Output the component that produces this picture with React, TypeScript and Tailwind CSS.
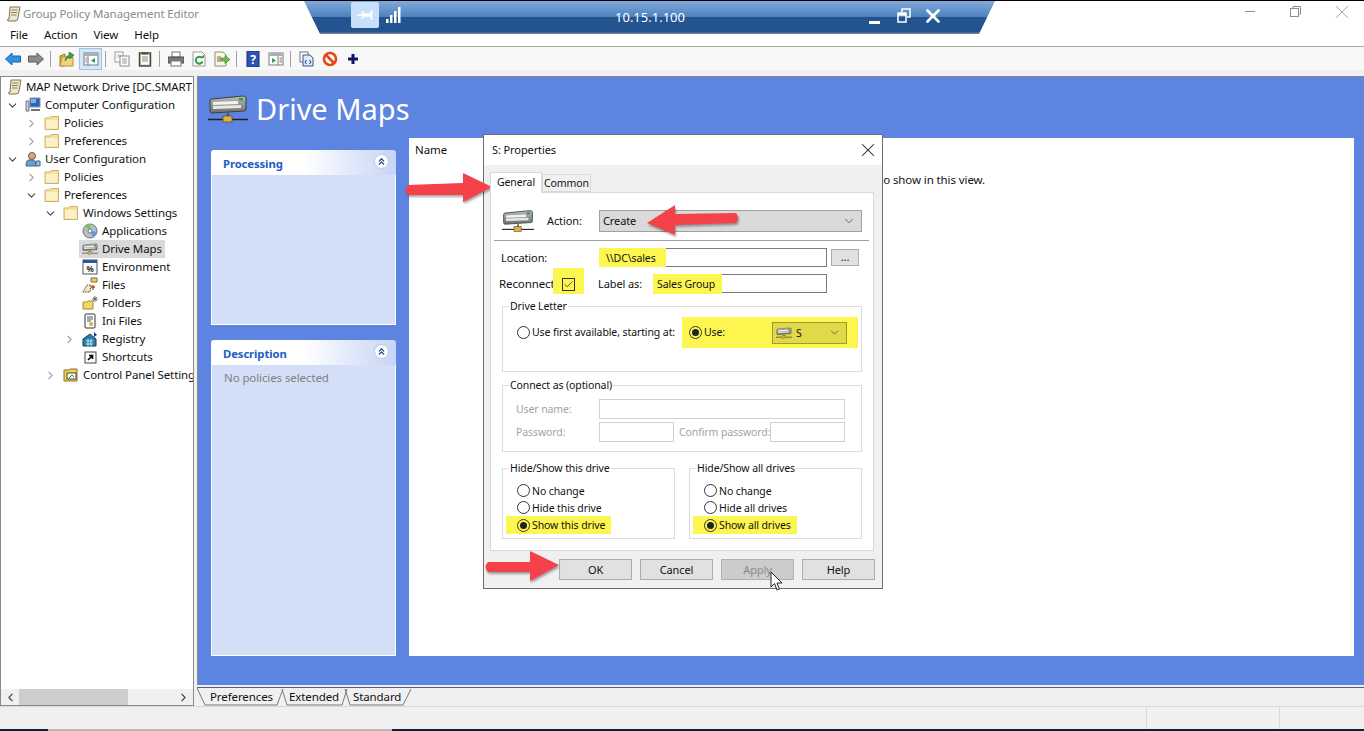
import { ReactNode } from "react"
import { ChevronDown, ChevronRight, ChevronLeft, ChevronsUp, X, Check } from "lucide-react"

// --- little drawings -------------------------------------------------------

function DriveIcon({ className }: { className?: string }) {
  return (
    <svg viewBox="0 0 40 28" className={"shrink-0 " + (className ?? "")}>
      <defs>
        <linearGradient id="dg" x1="0" y1="0" x2="0" y2="1">
          <stop offset="0" stopColor="#b9bcb9" />
          <stop offset="1" stopColor="#6d706c" />
        </linearGradient>
      </defs>
      <path d="M2 6 Q2 4 4 4 L35 1 Q38 1 38 3 L38 14 Q38 16 36 16 L4 18 Q2 18 2 16Z" fill="url(#dg)" stroke="#3c3f3c" strokeWidth="1" />
      <path d="M5 7 L30 6 L30 9 L5 10Z" fill="#f2f3f2" />
      <path d="M5 11 L33 10 L33 13 L5 14Z" fill="#e6e8e6" />
      <rect x="31" y="3" width="4" height="2.5" fill="#1fa83c" />
      <rect x="19" y="18" width="2" height="4" fill="#555" />
      <path d="M0 24.5 H40" stroke="#222" strokeWidth="1.4" />
      <rect x="15" y="21" width="9" height="6" fill="#d8b24a" stroke="#6b5518" strokeWidth="0.8" />
    </svg>
  )
}

function ScrollIcon() {
  return (
    <svg viewBox="0 0 16 16" className="w-4 h-4 shrink-0">
      <path d="M4 1 H14 L12 12 Q12 15 9 15 H2 Q1 15 2 13 H3Z" fill="#eee6c8" stroke="#7d7458" />
      <path d="M5.5 4 H11.5 M5 6.5 H11 M5 9 H10.5" stroke="#8a8268" />
    </svg>
  )
}

function FolderIcon() {
  return (
    <svg viewBox="0 0 16 16" className="w-4 h-4 shrink-0">
      <path d="M1 3 H6 L7 1.5 H14.5 V14.5 H1Z" fill="#f7df9e" stroke="#cfb26a" />
      <path d="M2 5 H13.5 V13.5 H2Z" fill="#fcf0c4" />
    </svg>
  )
}

function ComputerIcon() {
  return (
    <svg viewBox="0 0 16 16" className="w-4 h-4 shrink-0">
      <rect x="5" y="1" width="10" height="9" fill="#2b63b8" stroke="#8a93a3" />
      <rect x="6" y="2" width="5" height="4" fill="#7fb2ec" />
      <path d="M1 4 H4 V14 H1Z" fill="#ccd0d6" stroke="#6b7280" />
      <path d="M6 13 H15" stroke="#6b7280" strokeWidth="2" />
    </svg>
  )
}

function UserIcon() {
  return (
    <svg viewBox="0 0 16 16" className="w-4 h-4 shrink-0">
      <path d="M1 15 Q1 9 4 9 H8 Q11 9 11 15Z" fill="#6f9bc8" stroke="#3f6690" />
      <circle cx="7" cy="5" r="3.5" fill="#d9a878" stroke="#75553a" />
      <path d="M11 10 H15 V15 H11Z" fill="#9cbde0" stroke="#3f6690" />
    </svg>
  )
}

function TreeIcon({ name }: { name: string }) {
  const cls = "w-4 h-4 shrink-0"
  if (name === "scroll") return <ScrollIcon />
  if (name === "folder") return <FolderIcon />
  if (name === "computer") return <ComputerIcon />
  if (name === "user") return <UserIcon />
  if (name === "drive") return <DriveIcon className="w-4 h-4" />
  if (name === "apps")
    return (
      <svg viewBox="0 0 16 16" className={cls}>
        <circle cx="8" cy="8" r="7" fill="#b9bec0" stroke="#6d7375" />
        <path d="M8 8 L3 3 A7 7 0 0 1 9 1Z" fill="#7cc36a" />
        <path d="M8 8 L15 9 A7 7 0 0 1 11 14Z" fill="#5f9bd8" />
        <circle cx="8" cy="8" r="2" fill="#fff" stroke="#777" />
      </svg>
    )
  if (name === "env")
    return (
      <svg viewBox="0 0 16 16" className={cls}>
        <rect x="1" y="1" width="14" height="14" fill="#fff" stroke="#4a5666" />
        <rect x="1" y="1" width="14" height="3" fill="#30559a" />
        <text x="8" y="13" fontSize="8" fontWeight="700" textAnchor="middle" fill="#333">%</text>
      </svg>
    )
  if (name === "files")
    return (
      <svg viewBox="0 0 16 16" className={cls}>
        <path d="M9 1 H15 V5 H9Z" fill="#e8cf7a" stroke="#7d6a2c" />
        <path d="M1 15 L5 8 H9 L8 15Z" fill="#f3e9b8" stroke="#444" strokeDasharray="1.5 1" />
        <path d="M11 8 V13 M9 10 H13" stroke="#c0392b" strokeWidth="1.3" />
      </svg>
    )
  if (name === "folders")
    return (
      <svg viewBox="0 0 16 16" className={cls}>
        <path d="M1 7 H5 L6 6 H11 V14 H1Z" fill="#f2d768" stroke="#a08a2e" />
        <path d="M13 1 V7 M10 4 H16 M11 2 L15 6 M15 2 L11 6" stroke="#555" strokeWidth="0.8" />
      </svg>
    )
  if (name === "ini")
    return (
      <svg viewBox="0 0 16 16" className={cls}>
        <rect x="3" y="1" width="10" height="14" rx="1" fill="#fff" stroke="#333" />
        <path d="M5 4 H11 M5 6 H11 M5 8 H9" stroke="#555" />
        <circle cx="9" cy="11" r="2" fill="#d6b23c" />
      </svg>
    )
  if (name === "registry")
    return (
      <svg viewBox="0 0 16 16" className={cls}>
        <path d="M1 8 L8 3 L14 8 V15 H1Z" fill="#2e7fa8" stroke="#123f5c" />
        <path d="M4 10 H11 M4 13 H11 M6 8 V15 M9 8 V15" stroke="#bfe3f0" />
        <path d="M12 1 L15 4 L12 6Z" fill="#1c3f7a" />
      </svg>
    )
  if (name === "shortcut")
    return (
      <svg viewBox="0 0 16 16" className={cls}>
        <rect x="3" y="3" width="11" height="11" fill="#fff" stroke="#444" />
        <path d="M6 11 L10 7 M7 6.5 H10.5 V10" stroke="#000" strokeWidth="1.6" fill="none" />
      </svg>
    )
  return (
    <svg viewBox="0 0 16 16" className={cls}>
      <path d="M1 3 H6 L7 2 H14 V14 H1Z" fill="#f4d24e" stroke="#8c7420" />
      <rect x="4" y="6" width="9" height="6" fill="#fff" stroke="#444" />
      <path d="M6 11 L9 8 L11 10" stroke="#2a7d32" fill="none" />
    </svg>
  )
}

function ToolIcon({ name }: { name: string }) {
  const cls = "w-4 h-4 shrink-0"
  switch (name) {
    case "back":
      return <svg viewBox="0 0 16 16" className={cls}><path d="M0.5 8 L7 2 V5 H15.5 V11 H7 V14Z" fill="#2f92e4" stroke="#1766ad" /></svg>
    case "forward":
      return <svg viewBox="0 0 16 16" className={cls}><path d="M15.5 8 L9 2 V5 H0.5 V11 H9 V14Z" fill="#8b8b8b" stroke="#5f5f5f" /></svg>
    case "up":
      return <svg viewBox="0 0 16 16" className={cls}><path d="M1 5 L6 3 V15 H1Z" fill="#e0b24a" stroke="#9b7d2a" /><path d="M3 6 H14 V15 H1Z" fill="#f3d27a" stroke="#b3923a" /><path d="M6 10 Q7 5 10 4 V1 L15 4 L11 8 V6 Q8 7 6 10Z" fill="#3fa34a" stroke="#1f6b2c" strokeWidth="0.6" /></svg>
    case "tree":
      return <svg viewBox="0 0 16 16" className={cls}><rect x="1" y="2" width="14" height="12" fill="#fff" stroke="#7b7b7b" /><rect x="1" y="2" width="14" height="3" fill="#aab0b6" /><path d="M5 5 V14 M2.5 7 H4 M2.5 9 H4 M2.5 11 H4" stroke="#7b7b7b" /><path d="M12 7 L8 9.5 L12 12Z" fill="#2f9e44" /></svg>
    case "copy":
      return <svg viewBox="0 0 16 16" className={cls}><rect x="1" y="1" width="8" height="10" fill="#fff" stroke="#9a9a9a" /><path d="M3 4 H7 M3 6 H7" stroke="#b0b0b0" /><rect x="6" y="5" width="9" height="10" fill="#fff" stroke="#8a8a8a" /><path d="M8 8 H13 M8 10 H13 M8 12 H13" stroke="#999" /></svg>
    case "paste":
      return <svg viewBox="0 0 16 16" className={cls}><rect x="2.5" y="2" width="11" height="13" fill="#d9c9a5" stroke="#4a4034" strokeWidth="1.4" /><rect x="4" y="4" width="8" height="9.5" fill="#fff" /><path d="M5 6 H11 M5 8 H11 M5 10 H11" stroke="#888" /><rect x="5" y="1" width="6" height="2.5" fill="#555" /></svg>
    case "print":
      return <svg viewBox="0 0 16 16" className={cls}><rect x="4" y="1" width="8" height="5" fill="#fff" stroke="#777" /><rect x="0" y="6" width="16" height="6" fill="#777" stroke="#4d4d4d" /><rect x="3" y="10" width="10" height="5" fill="#fff" stroke="#777" /></svg>
    case "refresh":
      return <svg viewBox="0 0 16 16" className={cls}><path d="M2 1 H11 L14 4 V15 H2Z" fill="#fff" stroke="#9a9a9a" /><path d="M11 7 A3.5 3.5 0 1 0 11.5 10.5" fill="none" stroke="#2f9e44" strokeWidth="2" /><path d="M9 7 H13 V3.5Z" fill="#2f9e44" /></svg>
    case "export":
      return <svg viewBox="0 0 16 16" className={cls}><path d="M1 1 H9 L12 4 V15 H1Z" fill="#fbf6dd" stroke="#8d8d7a" /><path d="M3 6 H7 M3 8 H7 M3 10 H7" stroke="#666" /><path d="M7 7 H11 V4.5 L16 8.5 L11 12.5 V10 H7Z" fill="#6cbf45" stroke="#3b7f22" strokeWidth="0.6" /></svg>
    case "help":
      return <svg viewBox="0 0 16 16" className={cls}><rect x="2" y="0" width="12" height="16" fill="#2b54b8" stroke="#1a2f78" /><text x="8" y="12.5" fontSize="12" fontWeight="700" textAnchor="middle" fill="#fff">?</text></svg>
    case "window":
      return <svg viewBox="0 0 16 16" className={cls}><rect x="1" y="2" width="14" height="12" fill="#fff" stroke="#7b7b7b" /><rect x="1" y="2" width="14" height="3" fill="#aab0b6" /><path d="M10 5 V14 M11.5 7 H14 M11.5 9 H14 M11.5 11 H14" stroke="#7b7b7b" /><path d="M4 7 L8 9.5 L4 12Z" fill="#2f9e44" /></svg>
    case "xml":
      return <svg viewBox="0 0 16 16" className={cls}><rect x="1" y="1" width="8" height="10" fill="#fff" stroke="#777" /><path d="M4 4 H11 L14 7 V15 H4Z" fill="#dfe9f7" stroke="#35578f" /><path d="M7.5 9 L6 11 L7.5 13 M10.5 9 L12 11 L10.5 13" fill="none" stroke="#1f3f7a" /></svg>
    case "stop":
      return <svg viewBox="0 0 16 16" className={cls}><circle cx="8" cy="8" r="6" fill="#fff" stroke="#e2481c" strokeWidth="2.6" /><path d="M4 4 L12 12" stroke="#e2481c" strokeWidth="2.6" /></svg>
    default:
      return <svg viewBox="0 0 16 16" className={cls}><path d="M8 3 V13 M3 8 H13" stroke="#12146e" strokeWidth="3" /></svg>
  }
}

function Radio({ on }: { on?: boolean }) {
  return (
    <span className="w-[13px] h-[13px] shrink-0 rounded-full border border-[#333333] flex items-center justify-center">
      {on && <span className="w-[7px] h-[7px] rounded-full bg-[#222222]" />}
    </span>
  )
}

function Group({ label, className, children }: { label: string; className: string; children: ReactNode }) {
  return (
    <div className={"relative border border-[#dcdcdc] text-[10.5px] " + className}>
      <span className="absolute left-[6px] -top-[8px] bg-white px-[1px] leading-[15px]">{label}</span>
      {children}
    </div>
  )
}

function RadioRow({ label, on }: { label: string; on?: boolean }) {
  if (on) {
    return (
      <div className="-ml-[11px] pl-[11px] pr-[6px] w-fit h-[18px] bg-[#fdf650] flex items-center gap-[2px]">
        <Radio on />
        <span>{label}</span>
      </div>
    )
  }
  return (
    <div className="h-[17px] flex items-center gap-[2px]">
      <Radio />
      <span>{label}</span>
    </div>
  )
}

function Panel({ title, className, children }: { title: string; className: string; children?: ReactNode }) {
  return (
    <div className={"flex flex-col " + className}>
      <div className="h-[25px] shrink-0 rounded-t-[3px] bg-[linear-gradient(90deg,#ffffff_50%,#c6d4f6_100%)] flex items-center pl-[12px] pr-[7px] justify-between">
        <span className="font-bold text-[#215dc6] text-[11.3px] pt-[3px]">{title}</span>
        <span className="w-[15px] h-[15px] rounded-full bg-white border border-[#b9c7e6] flex items-center justify-center -mt-[2px]">
          <ChevronsUp size={11} strokeWidth={2.5} className="text-[#1f3f8f]" />
        </span>
      </div>
      <div className="flex-1 bg-[#d3dff7] border-x border-b border-white pl-[12px] pt-[5px] text-[#808080]">{children}</div>
    </div>
  )
}

// --- data -------------------------------------------------------------------

const treeRows = [
  { label: "Computer Configuration", icon: "computer", pad: "pl-[6px]", open: true },
  { label: "Policies", icon: "folder", pad: "pl-[25px]", open: false },
  { label: "Preferences", icon: "folder", pad: "pl-[25px]", open: false },
  { label: "User Configuration", icon: "user", pad: "pl-[6px]", open: true },
  { label: "Policies", icon: "folder", pad: "pl-[25px]", open: false },
  { label: "Preferences", icon: "folder", pad: "pl-[25px]", open: true },
  { label: "Windows Settings", icon: "folder", pad: "pl-[44px]", open: true },
  { label: "Applications", icon: "apps", pad: "pl-[63px]" },
  { label: "Drive Maps", icon: "drive", pad: "pl-[63px]", selected: true },
  { label: "Environment", icon: "env", pad: "pl-[63px]" },
  { label: "Files", icon: "files", pad: "pl-[63px]" },
  { label: "Folders", icon: "folders", pad: "pl-[63px]" },
  { label: "Ini Files", icon: "ini", pad: "pl-[63px]" },
  { label: "Registry", icon: "registry", pad: "pl-[63px]", open: false },
  { label: "Shortcuts", icon: "shortcut", pad: "pl-[63px]" },
  { label: "Control Panel Settings", icon: "control", pad: "pl-[44px]", open: false },
]

// "sep" draws a divider, the rest name a button
const toolbar = ["back", "forward", "sep", "up", "tree", "sep", "copy", "paste", "sep", "print", "refresh", "export", "sep", "help", "window", "sep", "xml", "stop", "plus"]

export default function App() {
  return (
    <div className="relative w-[1364px] h-[731px] overflow-hidden bg-white flex flex-col text-[11.5px] leading-[16px] text-[#111111] font-['Noto_Sans','Open_Sans',sans-serif] tracking-[-0.1px] whitespace-nowrap">
      {/* title bar */}
      <div className="h-[26px] shrink-0 border-t border-black flex items-center pl-[6px]">
        <ScrollIcon />
        <span className="ml-[1px] text-[#8a8a8a]">Group Policy Management Editor</span>
        <div className="ml-auto flex items-center -mt-[4px]">
          <span className="w-[10px] h-[1px] bg-[#8f8f8f] mr-[35px]" />
          <svg viewBox="0 0 11 11" className="w-[11px] h-[11px] mr-[30px]" fill="none" stroke="#8f8f8f">
            <path d="M3 2.5 V0.5 H10.5 V8 H8" />
            <rect x="0.5" y="2.5" width="8" height="8" />
          </svg>
          <X size={22} strokeWidth={0.9} className="mr-[11px] text-[#8f8f8f]" />
        </div>
      </div>

      {/* menu */}
      <div className="h-[20px] shrink-0 flex items-center pl-[10px] pb-[2px] gap-[16px]">
        <span>File</span>
        <span>Action</span>
        <span>View</span>
        <span>Help</span>
      </div>

      {/* toolbar */}
      <div className="h-[24px] shrink-0 border-t border-[#a6a6a6] bg-[#f8f8f8] flex items-center pl-[5px] gap-[7px]">
        {toolbar.map((t, i) =>
          t === "sep" ? (
            <span key={i} className="w-[1px] h-[16px] bg-[#a0a0a0] -ml-[1px] mr-[1px]" />
          ) : t === "tree" ? (
            <span key={i} className="w-[23px] h-[22px] -mx-[3px] bg-[#d5e6f7] border border-[#99c4ea] flex items-center justify-center">
              <ToolIcon name={t} />
            </span>
          ) : (
            <ToolIcon key={i} name={t} />
          )
        )}
      </div>
      <div className="h-[6px] shrink-0 bg-[#f0f0f0]" />

      {/* main area */}
      <div className="h-[630px] shrink-0 flex bg-[#f0f0f0]">
        <div className="w-[194px] shrink-0 border border-[#8a8a8a] bg-white flex flex-col overflow-hidden">
          <div className="flex-1 pt-[1px] overflow-hidden">
            <div className="h-[18px] flex items-center pl-[6px] gap-[3px]">
              <ScrollIcon />
              <span className="pb-[1px]">MAP Network Drive [DC.SMART</span>
            </div>
            {treeRows.map((r, i) => (
              <div key={i} className={"h-[18px] flex items-center " + r.pad}>
                <span className="w-[10px] h-[10px] mr-[8px] shrink-0 flex items-center justify-center">
                  {r.open === true && <ChevronDown size={13} strokeWidth={2} className="shrink-0 text-[#444444]" />}
                  {r.open === false && <ChevronRight size={13} strokeWidth={2} className="shrink-0 text-[#a6a6a6]" />}
                </span>
                <span className={"h-[18px] -ml-[3px] pl-[3px] pr-[3px] flex items-center gap-[4px] " + (r.selected ? "bg-[#d9d9d9]" : "")}>
                  <TreeIcon name={r.icon} />
                  <span className="pb-[1px]">{r.label}</span>
                </span>
              </div>
            ))}
          </div>
          <div className="h-[16px] shrink-0 bg-[#f0f0f0] flex items-center">
            <ChevronLeft size={13} strokeWidth={2.2} className="ml-[3px] text-[#505050]" />
            <span className="ml-[2px] w-[109px] h-full bg-[#cdcdcd]" />
            <ChevronRight size={13} strokeWidth={2.2} className="ml-auto mr-[3px] text-[#505050]" />
          </div>
        </div>

        <div className="ml-[3px] flex-1 flex flex-col">
          <div className="h-[609px] shrink-0 border-t border-l border-[#8a8a8a] bg-[#5d84e0] flex flex-col">
            <div className="h-[61px] shrink-0 flex items-center pl-[10px] pt-[2px]">
              <DriveIcon className="w-[40px] h-[28px]" />
              <span className="ml-[8px] text-[29px] leading-[40px] text-white tracking-normal">Drive Maps</span>
            </div>
            <div className="h-[518px] flex pl-[13px] pr-[10px]">
              <div className="w-[185px] shrink-0 pt-[12px] flex flex-col gap-[15px]">
                <Panel title="Processing" className="h-[175px]" />
                <Panel title="Description" className="h-[316px]">No policies selected</Panel>
              </div>
              <div className="ml-[13px] flex-1 bg-white flex flex-col">
                <div className="pl-[6px] pt-[4px] h-[34px]">Name</div>
                <div className="flex justify-end pr-[369px]">There are no items to show in this view.</div>
              </div>
            </div>
          </div>
          <div className="h-[2px] shrink-0 bg-[#eaeef8]" />
          <div className="h-[1px] shrink-0 bg-[#5f5f5f]" />
          <div className="relative h-[18px] flex pl-[13px]">
            <svg className="absolute left-0 top-0 w-[220px] h-[18px]" viewBox="0 0 220 18">
              <path d="M0 0 L8 17 H80 L86 1" fill="none" stroke="#7a7a7a" />
              <path d="M85 1 L90 17 H145 L150 1" fill="none" stroke="#7a7a7a" />
              <path d="M148 1 L153 17 H206 L214 1" fill="none" stroke="#7a7a7a" />
            </svg>
            <span className="relative w-[79px] leading-[18px]">Preferences</span>
            <span className="relative w-[64px] leading-[18px]">Extended</span>
            <span className="relative leading-[18px]">Standard</span>
          </div>
        </div>
      </div>

      {/* status bar */}
      <div className="h-[23px] shrink-0 border-t border-[#d9d9d9] bg-[#f0f0f0] flex justify-end">
        <span className="w-[133px] border-l border-[#d9d9d9]" />
        <span className="w-[85px] border-l border-[#d9d9d9]" />
      </div>
      <div className="h-[2px] shrink-0 bg-[#0b2233] flex">
        <span className="ml-[48px] w-[344px] bg-[#b9b9b9]" />
      </div>

      {/* remote desktop connection bar */}
      <div className="absolute left-[304px] top-[1px] w-[691px] h-[33px] [clip-path:polygon(0_0,100%_0,calc(100%-16px)_100%,16px_100%)] bg-[linear-gradient(#83aadb_0%,#4d82c0_47%,#23548f_49%,#23548f_95%,#6f8097_96%)] flex items-center text-white">
        <span className="ml-[47px] -mt-[5px] w-[28px] h-[26px] rounded-[2px] bg-[#c9e0fa] flex items-center justify-center">
          <svg viewBox="0 0 16 10" className="w-[16px] h-[10px]" fill="none" stroke="#fff">
            <path d="M0 5 H5" strokeWidth="1.6" />
            <path d="M5.5 1 V9 M14.5 0 V10" strokeWidth="1.6" />
            <path d="M5 5 H14" strokeWidth="3.4" />
          </svg>
        </span>
        <svg viewBox="0 0 15 16" className="ml-[7px] -mt-[6px] w-[15px] h-[16px]" fill="#fff">
          <rect x="0" y="12" width="2.5" height="4" />
          <rect x="4" y="8" width="2.5" height="8" />
          <rect x="8" y="4" width="2.5" height="12" />
          <rect x="12" y="0" width="2.5" height="16" />
        </svg>
        <span className="ml-[213px] w-[72px] text-center text-[13px] -mt-[1px] tracking-normal">10.15.1.100</span>
        <span className="ml-[183px] mt-[10px] w-[11px] h-[3px] bg-white" />
        <svg viewBox="0 0 14 15" className="ml-[17px] -mt-[4px] w-[14px] h-[15px]" fill="none" stroke="#fff">
          <path d="M5 4 V1 H13 V9 H10" strokeWidth="1.5" />
          <rect x="1" y="5" width="8" height="9" strokeWidth="1.5" />
          <path d="M1 6.5 H9" strokeWidth="2.5" />
        </svg>
        <X size={22} strokeWidth={3} className="ml-[11px] -mt-[3px] text-white" />
      </div>

      {/* properties dialog */}
      <div className="absolute left-[483px] top-[134px] w-[400px] h-[455px] border border-[#6e6e6e] bg-[#f0f0f0] flex flex-col text-[11px]">
        <div className="h-[30px] shrink-0 bg-white flex items-center justify-between pl-[8px] pr-[3px]">
          <span>S: Properties</span>
          <X size={22} strokeWidth={1.1} className="text-[#222222]" />
        </div>
        <div className="h-[20px] mt-[7px] shrink-0 ml-[6px] flex items-end text-[10.5px]">
          <span className="relative z-10 h-[21px] -mb-[1px] w-[52px] bg-white border border-b-0 border-[#d9d9d9] text-center leading-[18px]">General</span>
          <span className="h-[18px] w-[49px] border border-[#d9d9d9] text-center leading-[17px]">Common</span>
        </div>
        <div className="h-[359px] shrink-0 ml-[6px] w-[384px] bg-white border border-[#d9d9d9]">
          <div className="mt-[16px] h-[24px] pl-[11px] flex items-center">
            <DriveIcon className="w-[32px] h-[24px]" />
            <span className="ml-[13px] w-[52px]">Action:</span>
            <div className="w-[263px] h-[22px] bg-[#dadada] border border-[#a0a0a0] flex items-center justify-between pl-[3px] pr-[5px]">
              <span>Create</span>
              <ChevronDown size={14} strokeWidth={1.3} className="text-[#444444]" />
            </div>
          </div>
          <div className="mt-[7px] ml-[3px] mr-[4px] h-[1px] bg-[#a0a0a0]" />
          <div className="mt-[7px] h-[19px] pl-[10px] flex items-center">
            <span className="w-[98px]">Location:</span>
            <div className="w-[228px] h-[19px] border border-[#7a7a7a] flex">
              <span className="w-[67px] -my-[1px] -ml-[1px] bg-[#fdf650] pl-[7px] flex items-center text-[10.5px]">\\DC\sales</span>
            </div>
            <span className="ml-[4px] w-[28px] h-[17px] bg-[#e1e1e1] border border-[#adadad] text-center leading-[13px]">...</span>
          </div>
          <div className="mt-[1px] h-[26px] pl-[8px] flex items-center">
            <span className="w-[54px] pt-[5px] text-[11.5px]">Reconnect:</span>
            <span className="w-[31px] h-[26px] bg-[#fdf650] flex items-center justify-center pt-[6px]">
              <span className="w-[13px] h-[13px] border border-[#333333] flex items-center justify-center">
                <Check size={11} strokeWidth={1.6} className="text-[#222222]" />
              </span>
            </span>
            <span className="ml-[14px] w-[55px] pt-[5px]">Label as:</span>
            <div className="w-[174px] h-[19px] border border-[#7a7a7a] flex mt-[4px]">
              <span className="w-[69px] -my-[1px] -ml-[1px] h-[20px] bg-[#fdf650] pl-[4px] flex items-center text-[10.5px]">Sales Group</span>
            </div>
          </div>

          <Group label="Drive Letter" className="mt-[12px] mx-[11px] h-[66px]">
            <div className="mt-[10px] h-[31px] flex items-center">
              <div className="w-[179px] pl-[14px] flex items-center gap-[2px]">
                <Radio />
                <span className="pb-[1px]">Use first available, starting at:</span>
              </div>
              <div className="w-[176px] h-[31px] pl-[7px] bg-[#fdf650] flex items-center">
                <Radio on />
                <span className="ml-[2px] w-[68px] pb-[1px]">Use:</span>
                <div className="w-[75px] h-[22px] bg-[#e0d94a] border border-[#a09c2a] flex items-center pl-[3px] pr-[5px]">
                  <DriveIcon className="w-[16px] h-[14px]" />
                  <span className="ml-[4px]">S</span>
                  <ChevronDown size={13} strokeWidth={1.3} className="ml-auto text-[#444444]" />
                </div>
              </div>
            </div>
          </Group>

          <Group label="Connect as (optional)" className="mt-[13px] mx-[11px] h-[67px]">
            <div className="pt-[13px] pl-[13px] text-[#a3a3a3]">
              <div className="h-[20px] flex items-center">
                <span className="w-[83px]">User name:</span>
                <span className="w-[246px] h-[20px] border border-[#d0d0d0]" />
              </div>
              <div className="mt-[3px] h-[20px] flex items-center">
                <span className="w-[83px]">Password:</span>
                <span className="w-[75px] h-[20px] border border-[#d0d0d0]" />
                <span className="ml-[5px] w-[91px]">Confirm password:</span>
                <span className="w-[75px] h-[20px] border border-[#d0d0d0]" />
              </div>
            </div>
          </Group>

          <div className="mt-[16px] mx-[11px] flex gap-[14px]">
            <Group label="Hide/Show this drive" className="w-[173px] h-[71px]">
              <div className="pt-[13px] pl-[14px]">
                <RadioRow label="No change" />
                <RadioRow label="Hide this drive" />
                <RadioRow label="Show this drive" on />
              </div>
            </Group>
            <Group label="Hide/Show all drives" className="w-[173px] h-[71px]">
              <div className="pt-[13px] pl-[14px]">
                <RadioRow label="No change" />
                <RadioRow label="Hide all drives" />
                <RadioRow label="Show all drives" on />
              </div>
            </Group>
          </div>
        </div>
        <div className="mt-[8px] pl-[75px] flex gap-[8px]">
          <span className="w-[73px] h-[21px] bg-[#e1e1e1] border border-[#adadad] text-center leading-[19px]">OK</span>
          <span className="w-[73px] h-[21px] bg-[#e1e1e1] border border-[#adadad] text-center leading-[19px]">Cancel</span>
          <span className="w-[73px] h-[21px] bg-[#cccccc] border border-[#b0b0b0] text-center leading-[19px] text-[#8a8a8a]">Apply</span>
          <span className="w-[73px] h-[21px] bg-[#e1e1e1] border border-[#adadad] text-center leading-[19px]">Help</span>
        </div>
      </div>

      {/* red arrows painted over the screenshot */}
      <svg className="absolute left-[400px] top-[165px] w-[100px] h-[45px] drop-shadow-[1px_2px_1px_rgba(0,0,0,0.35)]" viewBox="0 0 100 45">
        <path d="M8 20 L63 18 L63 8 L92 22 L63 37 L63 30 L8 30 Q3 25 8 20Z" fill="#f5414a" />
      </svg>
      <svg className="absolute left-[640px] top-[200px] w-[105px] h-[40px] drop-shadow-[1px_2px_1px_rgba(0,0,0,0.35)]" viewBox="0 0 105 40">
        <path d="M7 23 L35 5 L35 14 L96 13 Q100 18 96 23 L35 25 L35 35Z" fill="#f5414a" />
      </svg>
      <svg className="absolute left-[480px] top-[545px] w-[85px] h-[42px] drop-shadow-[1px_2px_1px_rgba(0,0,0,0.35)]" viewBox="0 0 85 42">
        <path d="M8 17 L50 17 L50 6 L79 20 L50 36 L50 27 L8 27 Q3 22 8 17Z" fill="#f5414a" />
      </svg>

      {/* mouse pointer */}
      <svg className="absolute left-[770px] top-[571px] w-[13px] h-[21px]" viewBox="0 0 13 21">
        <path d="M1 1 V16 L4.5 12.5 L7 19 L9.5 18 L7 12 H12Z" fill="#fff" stroke="#222" />
      </svg>
    </div>
  )
}
